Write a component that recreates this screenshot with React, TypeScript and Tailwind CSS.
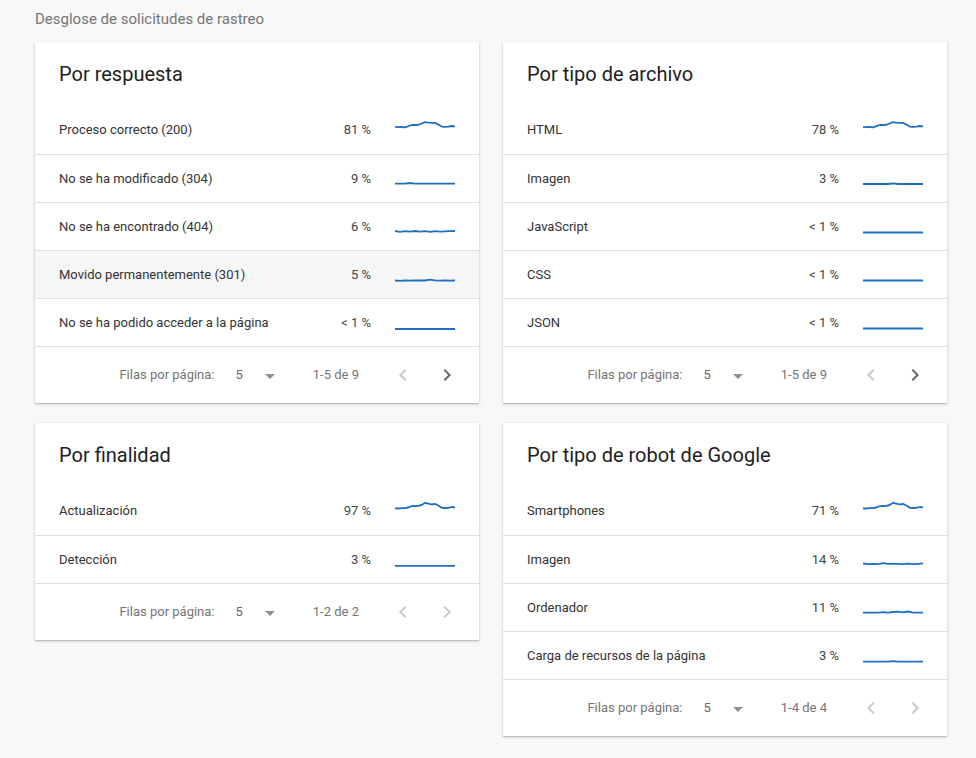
import React from "react";

type Row = {
  label: string;
  pct: string;
  points: number[];
  active?: boolean;
};

type Card = {
  title: string;
  rows: Row[];
  range: string;
  canNext: boolean;
};

// sparkline values: y inside a 60x20 box, evenly spaced along x
const flat = (y: number) => [y, y, y, y, y, y, y, y, y, y, y, y, y];

const peakA = [6.8, 7.2, 7, 7.3, 6.2, 5, 5, 4.8, 3.5, 2.2, 2.6, 2.8, 2.8, 4.6, 6.6, 6.8, 6.6, 6, 6.3];
const peakB = [7.3, 7.5, 7.2, 7.2, 6.5, 5.2, 5, 4.8, 4, 1.8, 2.6, 3.5, 2.8, 4.5, 6.8, 7, 6.9, 6, 6.3];

const cards: Card[] = [
  {
    title: "Por respuesta",
    range: "1-5 de 9",
    canNext: true,
    rows: [
      { label: "Proceso correcto (200)", pct: "81 %", points: peakA },
      { label: "No se ha modificado (304)", pct: "9 %", points: [14.7, 14.7, 14.7, 14, 14.7, 14.7, 14.7, 14.7, 14.7, 14.7, 14.7, 14.7, 14.7] },
      { label: "No se ha encontrado (404)", pct: "6 %", points: [14, 14.8, 14.2, 14.7, 14, 14.6, 14.1, 14.8, 14.2, 14.6, 14.3, 14.2, 14] },
      { label: "Movido permanentemente (301)", pct: "5 %", points: [15.5, 15.8, 15.5, 15.6, 15.5, 15.5, 15.5, 14.6, 15.3, 15.6, 15.5, 15.6, 15.5], active: true },
      { label: "No se ha podido acceder a la página", pct: "< 1 %", points: flat(16) },
    ],
  },
  {
    title: "Por tipo de archivo",
    range: "1-5 de 9",
    canNext: true,
    rows: [
      { label: "HTML", pct: "78 %", points: peakA },
      { label: "Imagen", pct: "3 %", points: [15, 15, 15, 15, 15, 15, 14.3, 15, 15, 15, 15, 15, 15] },
      { label: "JavaScript", pct: "< 1 %", points: flat(15.5) },
      { label: "CSS", pct: "< 1 %", points: flat(15.5) },
      { label: "JSON", pct: "< 1 %", points: flat(15.5) },
    ],
  },
  {
    title: "Por finalidad",
    range: "1-2 de 2",
    canNext: false,
    rows: [
      { label: "Actualización", pct: "97 %", points: peakB },
      { label: "Detección", pct: "3 %", points: flat(15.8) },
    ],
  },
  {
    title: "Por tipo de robot de Google",
    range: "1-4 de 4",
    canNext: false,
    rows: [
      { label: "Smartphones", pct: "71 %", points: peakB },
      { label: "Imagen", pct: "14 %", points: [13.5, 14.2, 13.8, 14.1, 13.2, 13.8, 13.8, 13.8, 14.2, 13.7, 14.1, 13.8, 13.4] },
      { label: "Ordenador", pct: "11 %", points: [14.7, 14.7, 14.7, 14.7, 14.2, 14.7, 14, 13.6, 14.4, 13.5, 14.7, 14.7, 14.7] },
      { label: "Carga de recursos de la página", pct: "3 %", points: [15.7, 15.7, 15.7, 15.7, 15.7, 15.7, 15.2, 15.7, 15.7, 15.7, 15.7, 15.7, 15.7] },
    ],
  },
];

function Sparkline({ points }: { points: number[] }) {
  const step = 60 / (points.length - 1);
  const d = points.map((y, i) => `${(i * step).toFixed(2)},${y}`).join(" ");
  return (
    <svg width="60" height="20" viewBox="0 0 60 20" className="ml-6 shrink-0">
      <polyline points={d} fill="none" stroke="#1f6fc2" strokeWidth="1.8" strokeLinejoin="round" />
    </svg>
  );
}

function Chevron({ dir, enabled }: { dir: "left" | "right"; enabled: boolean }) {
  return (
    <span className="w-6 h-6 flex items-center justify-center">
      <svg width="24" height="24" viewBox="0 0 24 24" fill={enabled ? "#666666" : "#c8c8c8"}>
        {dir === "right" ? (
          <path d="M10 6L8.59 7.41 13.17 12l-4.58 4.59L10 18l6-6z" />
        ) : (
          <path d="M15.41 7.41L14 6l-6 6 6 6 1.41-1.41L10.83 12z" />
        )}
      </svg>
    </span>
  );
}

function BreakdownCard({ card }: { card: Card }) {
  return (
    <div className="bg-white shadow-[0_1px_3px_rgba(0,0,0,0.2),0_1px_1px_rgba(0,0,0,0.12)]">
      <div className="h-[65px] pb-[1px] flex items-center px-6 text-[20px] text-[#212121]">{card.title}</div>
      {card.rows.map((row, i) => (
        <div
          key={row.label}
          className={`h-12 flex items-center px-6 border-b border-[#e0e0e0] text-[13px] ${i === 0 ? "pb-[2px]" : ""} ${row.active ? "bg-[#f6f6f6]" : ""}`}
        >
          <span className="flex-1 text-[#333333]">{row.label}</span>
          <span className="text-[#444444]">{row.pct}</span>
          <Sparkline points={row.points} />
        </div>
      ))}
      <div className="h-14 flex items-center justify-end pr-5 text-[13px] text-[#757575]">
        <span>Filas por página:</span>
        <span className="ml-[21px] text-[#666666]">5</span>
        <svg width="10" height="5" viewBox="7 10 10 5" className="ml-[22px] mt-[3px]" fill="#8f8f8f">
          <path d="M7 10l5 5 5-5z" />
        </svg>
        <span className="ml-[38px]">{card.range}</span>
        <span className="ml-8">
          <Chevron dir="left" enabled={false} />
        </span>
        <span className="ml-5">
          <Chevron dir="right" enabled={card.canNext} />
        </span>
      </div>
    </div>
  );
}

export default function App() {
  return (
    <div className="min-h-screen bg-[#f8f8f8] px-[35px] pt-[9px] pb-6 font-['Roboto',sans-serif]">
      <div className="text-[15px] text-[#757575] leading-5">Desglose de solicitudes de rastreo</div>
      <div className="mt-[13px] grid grid-cols-[444px_444px] gap-x-6 gap-y-5 items-start">
        {cards.map((card) => (
          <BreakdownCard key={card.title} card={card} />
        ))}
      </div>
    </div>
  );
}
